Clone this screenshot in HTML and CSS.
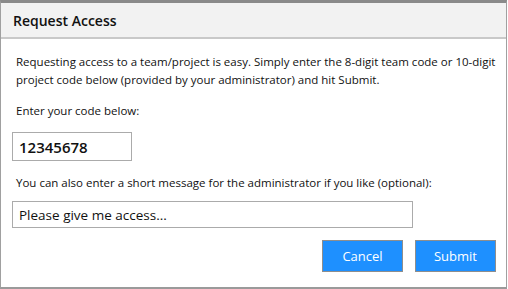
FILE: index.html
```html
<!DOCTYPE html>
<html lang="en">
<head>
<meta charset="UTF-8" />
<title>Request Access</title>
<link rel="stylesheet" href="styles.css">
</head>
<body>
<div class="dialog">
    <div class="dialog-header">Request Access</div>

    <form class="dialog-body" id="request-form">
        <p class="intro">Requesting access to a team/project is easy. Simply enter the 8-digit team code or 10-digit project code below (provided by your administrator) and hit Submit.</p>

        <label for="code" class="label">Enter your code below:</label>
        <input type="text" id="code" class="code-input" value="12345678" />

        <label for="message" class="label">You can also enter a short message for the administrator if you like (optional):</label>
        <input type="text" id="message" class="message-input" value="Please give me access..." />

        <div class="actions">
            <button type="button" class="btn">Cancel</button>
            <button type="submit" class="btn">Submit</button>
        </div>
    </form>
</div>
</body>
</html>
```

FILE: styles.css
```css
body {
    margin: 0;
    padding: 0;
    background: #ffffff;
    font-family: "Open Sans", "Noto Sans", sans-serif;
    color: #111;
}
.dialog {
    width: 505px;
    height: 284px;
    border: 1px solid #a0a0a0;
    border-top: 3px solid #8a8a8a;
    border-bottom: 2px solid #9a9a9a;
    display: flex;
    flex-direction: column;
}
.dialog-header {
    height: 34px;
    line-height: 36px;
    background: #f2f2f2;
    border-bottom: 2px solid #c9c9c9;
    padding-left: 12px;
    font-size: 14px;
    font-weight: 600;
    color: #111;
}
.dialog-body {
    display: flex;
    flex-direction: column;
    align-items: flex-start;
    padding: 14px 10px 0 11px;
}
.intro {
    margin: 0 0 0 4px;
    font-size: 11.5px;
    line-height: 18px;
}
.label {
    margin: 13px 0 0 4px;
    font-size: 11.5px;
    line-height: 18px;
}
.code-input, .message-input {
    box-sizing: border-box;
    border: 1px solid #ababab;
    font-family: inherit;
    color: #111;
    padding: 0 6px;
    outline: none;
}
.code-input {
    margin-top: 12px;
    width: 120px;
    height: 29px;
    font-size: 15px;
    font-weight: 600;
}
.message-input {
    margin-top: 9px;
    width: 401px;
    height: 27px;
    font-size: 13.5px;
}
.actions {
    align-self: stretch;
    display: flex;
    justify-content: flex-end;
    gap: 12px;
    margin-top: 12px;
}
.btn {
    width: 81px;
    height: 32px;
    background: #1e90ff;
    border: 1px solid #8e8e8e;
    color: #fff;
    font-family: inherit;
    font-size: 13px;
    cursor: pointer;
}
.btn:hover {
    background: #1a7fe0;
}
```
